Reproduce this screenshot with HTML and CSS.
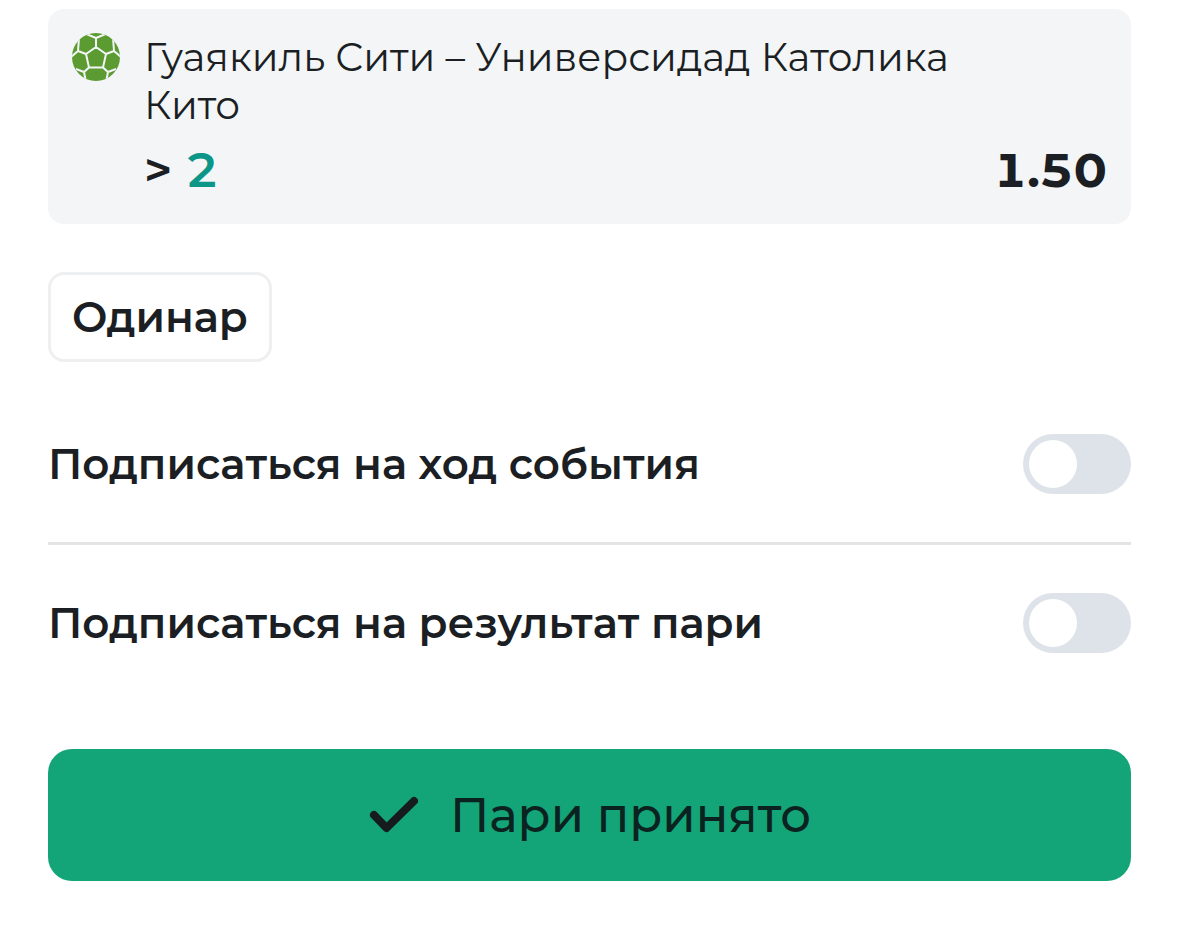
FILE: index.html
```html
<!DOCTYPE html>
<html lang="ru">
<head>
    <meta charset="UTF-8">
    <meta name="viewport" content="width=device-width, initial-scale=1">
    <title>Купон</title>
    <link rel="stylesheet" href="styles.css">
</head>
<body>
    <main class="coupon">
        <section class="bet">
            <!-- Football icon -->
            <svg class="bet-icon" viewBox="0 0 48 48" aria-hidden="true">
                <defs>
                    <clipPath id="ball"><circle cx="24" cy="24" r="24"/></clipPath>
                </defs>
                <g clip-path="url(#ball)">
                    <rect width="48" height="48" fill="#5b9b32"/>
                    <path fill="none" stroke="#f3f6f7" stroke-width="2" stroke-linejoin="round" d="M24 14L34 21L31 34.5H17L14 21ZM24 14V5M12 0L24 5L36 0M34 21L42 18L41 5L35 0M42 18L49 24M14 21L6 18L7 5L13 0M6 18L-1 24M31 34.5L36 39L34 49M36 39L44 36M17 34.5L12 39L14 49M12 39L4 36"/>
                </g>
            </svg>
            <div class="bet-info">
                <p class="bet-name">Гуаякиль Сити – Универсидад Католика Кито</p>
                <div class="bet-row">
                    <span class="bet-pick">&gt; <span class="bet-value">2</span></span>
                    <span class="bet-odds">1.50</span>
                </div>
            </div>
        </section>

        <button type="button" class="bet-type">Одинар</button>

        <div class="options">
            <div class="option">
                <label for="followEvent">Подписаться на ход события</label>
                <input type="checkbox" class="switch" id="followEvent">
            </div>
            <div class="option">
                <label for="followResult">Подписаться на результат пари</label>
                <input type="checkbox" class="switch" id="followResult">
            </div>
        </div>

        <button type="button" class="submit">
            <svg class="check" viewBox="0 0 50 38" aria-hidden="true">
                <path d="M6 19L18.5 32L46 5" fill="none" stroke="#161b1d" stroke-width="8" stroke-linecap="round" stroke-linejoin="round"/>
            </svg>
            <span>Пари принято</span>
        </button>
    </main>
</body>
</html>
```

FILE: styles.css
```css
* {
    box-sizing: border-box;
}
body {
    margin: 0;
    background: #fff;
    color: #1b1f24;
    font-family: Montserrat, Inter, sans-serif;
}
button {
    font-family: inherit;
    color: inherit;
    cursor: pointer;
}
.coupon {
    padding: 9px 48px 64px;
}
/* Bet card */
.bet {
    display: flex;
    gap: 24px;
    padding: 24px;
    background: #f3f5f7;
    border-radius: 16px;
}
.bet-icon {
    flex: none;
    width: 48px;
    height: 48px;
}
.bet-info {
    flex: 1;
}
.bet-name {
    max-width: 860px;
    margin: 0;
    font-size: 39px;
    font-weight: 400;
    line-height: 48px;
}
.bet-row {
    display: flex;
    justify-content: space-between;
    align-items: center;
    margin-top: 11px;
    line-height: 60px;
    font-size: 48px;
    font-variant-numeric: tabular-nums;
}
.bet-pick {
    font-weight: 600;
}
.bet-value {
    color: #0b9688;
}
.bet-odds {
    font-weight: 700;
}
.bet-type {
    margin-top: 48px;
    padding: 18px 21px;
    border: 3px solid #eeeff1;
    border-radius: 16px;
    background: #fff;
    font-size: 42px;
    font-weight: 600;
    line-height: 48px;
}
/* Subscriptions */
.options {
    margin-top: 24px;
}
.option {
    display: flex;
    justify-content: space-between;
    align-items: center;
    padding: 48px 0;
    font-size: 42px;
    font-weight: 600;
    line-height: 60px;
}
.option + .option {
    border-top: 3px solid #e2e4e6;
}
.switch {
    appearance: none;
    flex: none;
    width: 108px;
    height: 60px;
    margin: 0;
    padding: 6px;
    border-radius: 30px;
    background: #dee2e9;
    cursor: pointer;
}
.switch::before {
    content: "";
    display: block;
    width: 48px;
    height: 48px;
    border-radius: 50%;
    background: #fff;
}
.switch:checked {
    background: #13a578;
}
.switch:checked::before {
    margin-left: auto;
}
.submit {
    display: flex;
    justify-content: center;
    align-items: center;
    gap: 32px;
    width: 100%;
    margin-top: 48px;
    padding: 36px 24px;
    border: none;
    border-radius: 24px;
    background: #13a578;
    color: #0b2320;
    font-size: 48px;
    font-weight: 500;
    line-height: 60px;
}
.check {
    width: 50px;
    height: 38px;
}
```
